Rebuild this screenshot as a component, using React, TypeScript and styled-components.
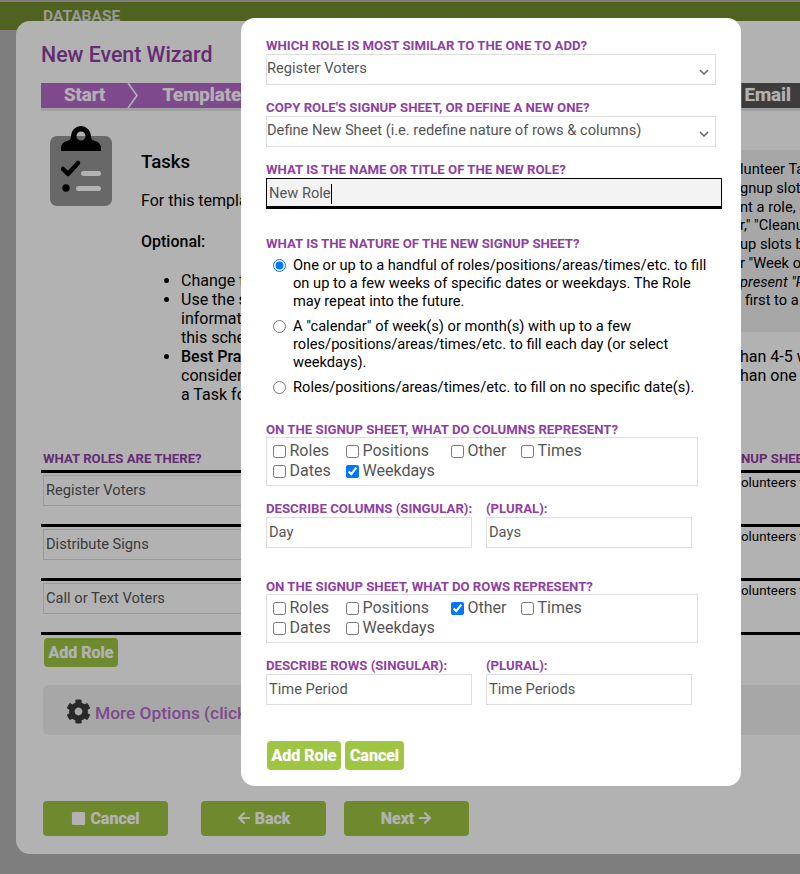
import React from "react";
import styled, { createGlobalStyle } from "styled-components";
import { FaArrowLeft, FaArrowRight, FaCog, FaStop } from "react-icons/fa";

const Global = createGlobalStyle`
  html, body { margin: 0; padding: 0; width: 800px; height: 874px; overflow: hidden; }
  body { font-family: Roboto, "Liberation Sans", sans-serif; font-size: 16px; color: #000; background: #b5b5b5; }
  * { box-sizing: border-box; }
`;

const chevronSvg =
  "data:image/svg+xml;utf8," +
  encodeURIComponent(
    '<svg xmlns="http://www.w3.org/2000/svg" width="10" height="6" viewBox="0 0 10 6"><path d="M1 1l4 4 4-4" fill="none" stroke="#666" stroke-width="1.5"/></svg>'
  );

const Shell = styled.div`
  position: relative;
  width: 800px;
  height: 874px;
  overflow: hidden;
  background: #b5b5b5;
`;
const TopNav = styled.div`
  height: 30px;
  border-top: 2px solid #b5b5b5;
  background: #718d2f;
  padding: 5px 0 0 43px;
  font-size: 15.5px;
  font-weight: 700;
  color: #dcdcdc;
  line-height: 18px;
`;
const Panel = styled.div`
  position: absolute;
  left: 16px;
  top: 21px;
  width: 810px;
  height: 833px;
  background: #fff;
  border-radius: 14px;
  padding: 20px 0 0 25px;
  overflow: hidden;
`;
const Title = styled.h1`
  margin: 0;
  font-size: 21.33px;
  line-height: 28px;
  font-weight: 500;
  color: #9040a3;
`;
const Steps = styled.div`
  display: flex;
  align-items: center;
  height: 28px;
  margin-top: 14px;
  background: #b56acb;
  border-bottom: 3px solid #e5e5e5;
  color: #fff;
  font-size: 18.67px;
  font-weight: 700;
  line-height: 25px;
  text-shadow: 0 0 1px rgba(255, 255, 255, 0.6);
`;
const Step = styled.span`
  padding-left: 23px;
`;
const Chevron = styled.svg`
  width: 12px;
  height: 25px;
  margin-left: 22px;
  flex: none;
`;
const TemplateStep = styled.span`
  padding-left: 23px;
  width: 603px;
  flex: none;
`;
const EmailStep = styled.span`
  flex: 1;
  background: #575757;
  height: 25px;
  padding-left: 2px;
`;
const TaskRow = styled.div`
  display: flex;
  height: 324px;
  margin-top: 15px;
`;
const TaskIcon = styled.svg`
  width: 62px;
  height: 80px;
  margin: 0 29px 0 9px;
  flex: none;
`;
const TaskBody = styled.div`
  width: 600px;
  flex: none;
  line-height: 18.75px;
  white-space: nowrap;
`;
const TaskHeading = styled.h2`
  margin: 24px 0 0;
  font-size: 18.67px;
  line-height: 24px;
  font-weight: 500;
`;
const TaskText = styled.p`
  margin: 18px 0 0;
`;
const Strong = styled.span`
  font-weight: 500;
`;
const OptionalText = styled.p`
  margin: 22px 0 0;
  font-weight: 500;
`;
const TaskList = styled.ul`
  margin: 19px 0 0;
  padding-left: 40px;
  line-height: 19px;
`;
const AsideCol = styled.div`
  width: 100px;
  flex: none;
`;
const AsideBox = styled.div`
  background: #f0f0f0;
  margin: 24px 0 0 -1px;
  height: 182px;
  padding-top: 10px;
  font-size: 14.67px;
`;
const Fragment = styled.div<{ $indent?: number; $italic?: boolean }>`
  line-height: 18.75px;
  white-space: nowrap;
  padding-left: ${(p) => p.$indent ?? 0}px;
  font-style: ${(p) => (p.$italic ? "italic" : "normal")};
`;
const AsideAfter = styled.div`
  margin: 16px 0 0 -1px;
`;
const RoleTable = styled.div`
  margin-top: 1px;
`;
const RoleHead = styled.div`
  display: grid;
  grid-template-columns: 698px 1fr;
  padding-left: 2px;
  height: 19px;
`;
const PanelLabel = styled.div`
  font-size: 13.2px;
  font-weight: 700;
  line-height: 16px;
  color: #9040a3;
  white-space: nowrap;
  text-transform: uppercase;
`;
const RoleRow = styled.div`
  display: grid;
  grid-template-columns: 698px 1fr;
  height: 54px;
  border-top: 3px solid #000;
  padding: 2px 0 0 2px;
`;
const RoleInput = styled.input`
  width: 500px;
  height: 31px;
  border: 1px solid #ddd;
  background: #fff;
  padding: 0 2px 2px;
  font: 14.67px Roboto, sans-serif;
  color: #555;
`;
const RoleNote = styled.div`
  font-size: 13.3px;
  line-height: 16px;
  white-space: nowrap;
`;
const EndRule = styled.div`
  border-top: 3px solid #000;
  padding: 3px 0 0 3px;
`;
const PanelButton = styled.button`
  display: inline-flex;
  align-items: center;
  justify-content: center;
  gap: 4px;
  border: 0;
  border-radius: 4px;
  background: #9fc642;
  color: #fff;
  font: 700 16px Roboto, sans-serif;
  padding: 0 0 1px;
  text-shadow: 0 0 1px rgba(255, 255, 255, 0.7);
`;
const SmallPanelButton = styled(PanelButton)`
  width: 74px;
  height: 29px;
`;
const MoreOptions = styled.div`
  display: flex;
  align-items: center;
  margin: 18px 0 0 2px;
  height: 50px;
  background: #f0f0f0;
  border-radius: 6px;
  padding: 2px 0 0 23px;
  font-size: 17.33px;
  font-weight: 500;
  color: #b56acb;
  white-space: nowrap;
  gap: 4px;
  svg { width: 25px; height: 25px; color: #3a3a3a; flex: none; }
`;
const MoreText = styled.span`
  padding-top: 4px;
`;
const WizardNav = styled.div`
  display: flex;
  margin: 66px 0 0 2px;
`;
const WizardButton = styled(PanelButton)<{ $gap?: number }>`
  width: 125px;
  height: 35px;
  margin-right: ${(p) => p.$gap ?? 0}px;
`;
const Overlay = styled.div`
  position: absolute;
  inset: 0;
  background: rgba(0, 0, 0, 0.3);
`;
const Modal = styled.div`
  position: absolute;
  left: 241px;
  top: 18px;
  width: 500px;
  height: 768px;
  background: #fff;
  border-radius: 14px;
  padding: 20px 0 0 25px;
`;
const Label = styled.div<{ $top?: number }>`
  height: 16px;
  margin-top: ${(p) => p.$top ?? 0}px;
  font-size: 13.2px;
  line-height: 16px;
  font-weight: 700;
  color: #8f3fa3;
  white-space: nowrap;
  text-transform: uppercase;
`;
const Select = styled.select`
  display: block;
  appearance: none;
  width: 450px;
  height: 31px;
  border: 1px solid #ddd;
  background: #fff url("${chevronSvg}") no-repeat right 6px top 14px;
  padding: 0 0 4px;
  font: 14.67px Roboto, sans-serif;
  color: #555;
  border-radius: 0;
  outline: none;
`;
const FocusedField = styled.div`
  width: 456px;
  height: 31px;
  border: 1px solid #000;
  border-bottom-width: 3px;
  background: #f3f3f3;
  padding: 5px 2px 0;
  font-size: 14.67px;
  line-height: 18px;
  color: #555;
  display: flex;
`;
const Caret = styled.span`
  width: 1px;
  height: 20px;
  background: #000;
`;
const RadioGroup = styled.div`
  display: flex;
  flex-direction: column;
  gap: 7px;
  margin-top: 4px;
  padding-left: 7px;
  width: 450px;
`;
const RadioOption = styled.label`
  display: grid;
  grid-template-columns: 20px 1fr;
  font-size: 14.67px;
  line-height: 18px;
`;
const RadioInput = styled.input`
  margin: 3px 0 0;
  width: 13px;
  height: 13px;
`;
const CheckGroup = styled.div`
  width: 432px;
  height: 49px;
  margin-top: -1px;
  border: 1px solid #ddd;
  padding: 3px 0 0 6px;
  display: grid;
  grid-template-columns: 73px 105px 70px 1fr;
  grid-auto-rows: 20px;
  font-size: 16px;
  line-height: 20px;
  color: #555;
`;
const CheckOption = styled.label`
  display: flex;
  align-items: center;
  gap: 3.5px;
  white-space: nowrap;
`;
const CheckInput = styled.input`
  margin: 0;
  width: 13px;
  height: 13px;
  flex: none;
`;
const FieldRow = styled.div`
  display: grid;
  grid-template-columns: 206px 206px;
  column-gap: 14px;
`;
const FieldCol = styled.div`
  display: flex;
  flex-direction: column;
`;
const TextField = styled.input`
  width: 206px;
  height: 31px;
  border: 1px solid #ddd;
  background: #fff;
  padding: 0 2px 1px;
  font: 14.67px Roboto, sans-serif;
  color: #555;
`;
const ModalActions = styled.div`
  display: flex;
  gap: 4px;
  margin: 36px 0 0 1px;
`;
const ModalButton = styled(PanelButton)<{ $w: number }>`
  width: ${(p) => p.$w}px;
  height: 29px;
`;

function ClipboardIcon() {
  return (
    <TaskIcon viewBox="0 0 62 80" aria-hidden="true">
      <rect x="0" y="10" width="62" height="70" rx="7" fill="#959595" />
      <path
        fillRule="evenodd"
        d="M31 0a10 10 0 0 1 10 10c0 3 1 4 4 5 4 1 6 4 6 7v3H11v-3c0-3 2-6 6-7 3-1 4-2 4-5A10 10 0 0 1 31 0zm0 5.5a4.5 4.5 0 1 0 0 9 4.5 4.5 0 0 0 0-9z"
        fill="#000"
      />
      <path d="M13 43l5 5 10-11" fill="none" stroke="#000" strokeWidth="4.5" strokeLinecap="round" strokeLinejoin="round" />
      <rect x="31" y="45" width="20" height="5" rx="2.5" fill="#fff" />
      <circle cx="16" cy="62" r="3.7" fill="#000" />
      <rect x="26" y="60" width="25" height="5" rx="2.5" fill="#fff" />
    </TaskIcon>
  );
}

type Check = { label: string; checked?: boolean };
function Checks({ items }: { items: Check[] }) {
  return (
    <CheckGroup>
      {items.map((c) => (
        <CheckOption key={c.label}>
          <CheckInput type="checkbox" defaultChecked={c.checked} />
          {c.label}
        </CheckOption>
      ))}
    </CheckGroup>
  );
}

export default function App() {
  return (
    <Shell>
      <Global />
      <TopNav>DATABASE</TopNav>
      <Panel>
        <Title>New Event Wizard</Title>
        <Steps>
          <Step>Start</Step>
          <Chevron viewBox="0 0 12 25" aria-hidden="true">
            <path d="M1 0l9 12.5L1 25" fill="none" stroke="#fff" strokeWidth="1.6" />
          </Chevron>
          <TemplateStep>Template</TemplateStep>
          <EmailStep>Email</EmailStep>
        </Steps>
        <TaskRow>
          <ClipboardIcon />
          <TaskBody>
            <TaskHeading>Tasks</TaskHeading>
            <TaskText>For this template, tasks are the roles that volunteers sign up for.</TaskText>
            <OptionalText>Optional:</OptionalText>
            <TaskList>
              <li>Change the roles listed below.</li>
              <li>
                Use the signup sheet fields to add
                <br />
                information that helps volunteers with
                <br />
                this schedule.
              </li>
              <li>
                <Strong>Best Practice:</Strong> if a role needs more
                <br />
                consider splitting it into more
                <br />
                a Task for each one.
              </li>
            </TaskList>
          </TaskBody>
          <AsideCol>
            <AsideBox>
              <Fragment>lunteer Tasks</Fragment>
              <Fragment>gnup slots</Fragment>
              <Fragment>nt a role, a</Fragment>
              <Fragment>r," "Cleanup</Fragment>
              <Fragment>up slots by</Fragment>
              <Fragment>r "Week of</Fragment>
              <Fragment $italic>present "P</Fragment>
              <Fragment $indent={5}>first to a</Fragment>
            </AsideBox>
            <AsideAfter>
              <Fragment>han 4-5 w</Fragment>
              <Fragment>han one</Fragment>
            </AsideAfter>
          </AsideCol>
        </TaskRow>
        <RoleTable>
          <RoleHead>
            <PanelLabel>What roles are there?</PanelLabel>
            <PanelLabel>nup sheet</PanelLabel>
          </RoleHead>
          {["Register Voters", "Distribute Signs", "Call or Text Voters"].map((r) => (
            <RoleRow key={r}>
              <RoleInput defaultValue={r} />
              <RoleNote>olunteers to</RoleNote>
            </RoleRow>
          ))}
          <EndRule>
            <SmallPanelButton>Add Role</SmallPanelButton>
          </EndRule>
        </RoleTable>
        <MoreOptions>
          <FaCog />
          <MoreText>More Options (click to expand)</MoreText>
        </MoreOptions>
        <WizardNav>
          <WizardButton $gap={33}>
            <FaStop size={15} /> Cancel
          </WizardButton>
          <WizardButton $gap={18}>
            <FaArrowLeft size={14} /> Back
          </WizardButton>
          <WizardButton>
            Next <FaArrowRight size={14} />
          </WizardButton>
        </WizardNav>
      </Panel>
      <Overlay />
      <Modal>
        <Label>Which role is most similar to the one to add?</Label>
        <Select defaultValue="Register Voters">
          <option>Register Voters</option>
          <option>Distribute Signs</option>
          <option>Call or Text Voters</option>
        </Select>
        <Label $top={15}>Copy role's signup sheet, or define a new one?</Label>
        <Select defaultValue="new">
          <option value="new">Define New Sheet (i.e. redefine nature of rows &amp; columns)</option>
        </Select>
        <Label $top={15}>What is the name or title of the new role?</Label>
        <FocusedField>
          New Role
          <Caret />
        </FocusedField>
        <Label $top={27}>What is the nature of the new signup sheet?</Label>
        <RadioGroup>
          <RadioOption>
            <RadioInput type="radio" name="nature" defaultChecked />
            <span>
              One or up to a handful of roles/positions/areas/times/etc. to fill on up to a few weeks of specific dates
              or weekdays. The Role may repeat into the future.
            </span>
          </RadioOption>
          <RadioOption>
            <RadioInput type="radio" name="nature" />
            <span>
              A "calendar" of week(s) or month(s) with up to a few roles/positions/areas/times/etc. to fill each day (or
              select weekdays).
            </span>
          </RadioOption>
          <RadioOption>
            <RadioInput type="radio" name="nature" />
            <span>Roles/positions/areas/times/etc. to fill on no specific date(s).</span>
          </RadioOption>
        </RadioGroup>
        <Label $top={26}>On the signup sheet, what do columns represent?</Label>
        <Checks
          items={[
            { label: "Roles" },
            { label: "Positions" },
            { label: "Other" },
            { label: "Times" },
            { label: "Dates" },
            { label: "Weekdays", checked: true },
          ]}
        />
        <FieldRow>
          <FieldCol>
            <Label $top={15}>Describe columns (singular):</Label>
            <TextField defaultValue="Day" />
          </FieldCol>
          <FieldCol>
            <Label $top={15}>(plural):</Label>
            <TextField defaultValue="Days" />
          </FieldCol>
        </FieldRow>
        <Label $top={31}>On the signup sheet, what do rows represent?</Label>
        <Checks
          items={[
            { label: "Roles" },
            { label: "Positions" },
            { label: "Other", checked: true },
            { label: "Times" },
            { label: "Dates" },
            { label: "Weekdays" },
          ]}
        />
        <FieldRow>
          <FieldCol>
            <Label $top={15}>Describe rows (singular):</Label>
            <TextField defaultValue="Time Period" />
          </FieldCol>
          <FieldCol>
            <Label $top={15}>(plural):</Label>
            <TextField defaultValue="Time Periods" />
          </FieldCol>
        </FieldRow>
        <ModalActions>
          <ModalButton $w={74}>Add Role</ModalButton>
          <ModalButton $w={59}>Cancel</ModalButton>
        </ModalActions>
      </Modal>
    </Shell>
  );
}
